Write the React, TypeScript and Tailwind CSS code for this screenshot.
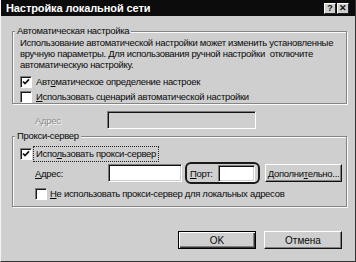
import React from "react";

function Check({ checked }: { checked?: boolean }) {
  return (
    <span className="w-[12px] h-[12px] shrink-0 bg-white border border-t-[#7a7a7a] border-l-[#7a7a7a] border-b-white border-r-white shadow-[inset_1px_1px_0_#1a1a1a] flex items-center justify-center">
      {checked && (
        <svg width="8" height="8" viewBox="0 0 8 8">
          <path d="M1 3.5L3 5.6L7 1.4" stroke="#111" strokeWidth="1.7" fill="none" />
        </svg>
      )}
    </span>
  );
}

function Field({ w, h = 18, disabled }: { w: string; h?: number; disabled?: boolean }) {
  return (
    <span
      className={
        (disabled ? "bg-[#cfcfcf] " : "bg-white ") +
        "block shrink-0 border border-t-[#7a7a7a] border-l-[#7a7a7a] border-b-white border-r-white shadow-[inset_1px_1px_0_#111,inset_-1px_-1px_0_#cfcfcf] " +
        w
      }
      style={{ height: h }}
    />
  );
}

function TitleBtn({ children }: { children: React.ReactNode }) {
  return (
    <span className="w-[12px] h-[11px] bg-[#cfcfcf] border border-t-white border-l-white border-r-[#222] border-b-[#222] flex items-center justify-center text-[9px] font-bold leading-none text-[#111] tracking-normal">
      {children}
    </span>
  );
}

export default function App() {
  return (
    <div className="w-[356px] h-[262px] bg-[#cfcfcf] flex flex-col font-['Liberation_Sans',Arial,sans-serif] text-[9.5px] tracking-[-0.3px] leading-[11px] text-[#0a0a0a] whitespace-nowrap border-l border-l-[#f4f4f4] border-r border-r-[#333] border-b border-b-[#333] overflow-hidden">
      <div className="h-[16px] shrink-0 bg-[#0c0c0c] flex items-center pl-[5px] pr-[6px]">
        <span className="text-white font-bold text-[11px] flex-1 tracking-[-0.1px]">Настройка локальной сети</span>
        <div className="flex gap-[1px]">
          <TitleBtn>?</TitleBtn>
          <TitleBtn>✕</TitleBtn>
        </div>
      </div>
      <div className="flex flex-col pl-[11px] pr-[8px]">
        <fieldset className="mt-[9px] border border-[#858585] shadow-[inset_1px_1px_0_#fafafa,1px_1px_0_#fafafa] pl-[7px] pr-[4px] pb-0">
          <legend className="ml-[-5px] px-[2px] bg-[#cfcfcf] leading-[12px]">Автоматическая настройка</legend>
          <div className="leading-[11px]">
            <div>Использование автоматической настройки может изменить установленные</div>
            <div>вручную параметры. Для использования ручной настройки&nbsp; отключите</div>
            <div>автоматическую настройку.</div>
          </div>
          <div className="flex items-center gap-[4px] mt-[5px] h-[13px]">
            <Check checked />
            <span>
              Авт<span className="underline">о</span>матическое определение настроек
            </span>
          </div>
          <div className="flex items-center gap-[4px] mt-[2px] h-[13px]">
            <Check />
            <span>
              <span className="underline">И</span>спользовать сценарий автоматической настройки
            </span>
          </div>
        </fieldset>
        <div className="flex items-center mt-[7px]">
          <span className="ml-[23px] w-[72px] text-[#8c8c8c] [text-shadow:1px_1px_0_#fafafa]">
            Адрес
          </span>
          <Field w="w-[149px]" disabled />
        </div>
        <fieldset className="mt-[1px] border border-[#858585] shadow-[inset_1px_1px_0_#fafafa,1px_1px_0_#fafafa] pl-[7px] pr-[4px] pb-[6px]">
          <legend className="ml-[-5px] px-[2px] bg-[#cfcfcf] leading-[12px]">Прокси-сервер</legend>
          <div className="flex items-center gap-[1px] mt-[5px] h-[13px]">
            <Check checked />
            <span className="border border-dotted border-[#222] px-[2px] py-[1px] leading-[12px]">
              Испо<span className="underline">л</span>ьзовать прокси-сервер
            </span>
          </div>
          <div className="flex items-center mt-[2px] h-[22px]">
            <span className="ml-[15px] w-[73px] shrink-0">
              <span className="underline">А</span>дрес:
            </span>
            <Field w="w-[74px]" />
            <div className="ml-[3px] w-[75px] shrink-0 h-[22px] border-2 border-[#1a1a1a] rounded-[6px] flex items-center pl-[3px]">
              <span className="w-[28px] shrink-0">
                <span className="underline">П</span>орт:
              </span>
              <Field w="w-[37px]" h={17} />
            </div>
            <span className="ml-[5px] w-[77px] shrink-0 h-[18px] flex items-center justify-center border border-t-white border-l-white border-r-[#111] border-b-[#111] shadow-[inset_-1px_-1px_0_#808080]">
              Дополни<span className="underline">т</span>ельно...
            </span>
          </div>
          <div className="flex items-center gap-[3px] mt-[3px] h-[13px] ml-[15px]">
            <Check />
            <span>
              <span className="underline">Н</span>е использовать прокси-сервер для локальных адресов
            </span>
          </div>
        </fieldset>
        <div className="flex justify-end gap-[8px] mt-[24px] mr-[5px] text-[10px] tracking-normal">
          <span className="w-[78px] h-[18px] flex items-center justify-center border border-black shadow-[inset_1px_1px_0_#fff,inset_-1px_-1px_0_#333,inset_-2px_-2px_0_#808080]">
            OK
          </span>
          <span className="w-[78px] h-[18px] flex items-center justify-center border border-t-white border-l-white border-r-[#111] border-b-[#111] shadow-[inset_-1px_-1px_0_#808080]">
            Отмена
          </span>
        </div>
      </div>
    </div>
  );
}
